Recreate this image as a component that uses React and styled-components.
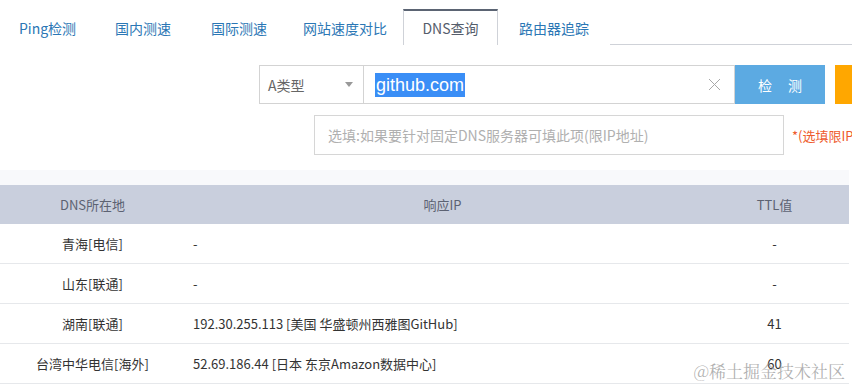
import React from "react";
import styled, { createGlobalStyle } from "styled-components";

const Global = createGlobalStyle`
  html, body { margin: 0; padding: 0; background: #fff; overflow: hidden; }
  body { font-family: "Microsoft YaHei", "Noto Sans CJK SC", "Liberation Sans", sans-serif; width: 852px; height: 389px; }
`;

const Page = styled.div`
  position: relative;
  width: 852px;
  height: 389px;
  overflow: hidden;
`;

const TabBar = styled.div`
  display: flex;
  height: 35px;
  padding-top: 9px;
  border-bottom: 1px solid #cfd2d8;
`;

const Tab = styled.div`
  display: flex;
  align-items: center;
  box-sizing: border-box;
  height: 36px;
  width: ${(p) => p.$w}px;
  justify-content: center;
  font-size: 14px;
  color: ${(p) => (p.$active ? "#555d6b" : "#2b77b5")};
  background: #fff;
  border-top: 2px solid ${(p) => (p.$active ? "#5b6473" : "transparent")};
  border-left: 1px solid ${(p) => (p.$active ? "#cfd2d8" : "transparent")};
  border-right: 1px solid ${(p) => (p.$active ? "#cfd2d8" : "transparent")};
  margin-bottom: -1px;
  white-space: nowrap;
`;

const SearchRow = styled.div`
  display: flex;
  margin-top: 20px;
  padding-left: 259px;
  height: 39px;
  & > * { flex-shrink: 0; }
`;

const Select = styled.div`
  box-sizing: border-box;
  width: 105px;
  height: 39px;
  border: 1px solid #d3d3d3;
  display: flex;
  align-items: center;
  justify-content: space-between;
  padding: 0 10px 0 8px;
  font-size: 14px;
  color: #666;
`;

const Arrow = styled.span`
  width: 0;
  height: 0;
  border-left: 4px solid transparent;
  border-right: 4px solid transparent;
  border-top: 5px solid #999;
`;

const Input = styled.div`
  box-sizing: border-box;
  width: 371px;
  height: 39px;
  border: 1px solid #d3d3d3;
  border-left: none;
  display: flex;
  align-items: center;
  justify-content: space-between;
  padding: 0 13px 0 11px;
`;

const Selected = styled.span`
  background: #3a8ef6;
  color: #fff;
  font-family: "Liberation Sans", Arial, sans-serif;
  font-size: 18px;
  line-height: 24px;
  padding: 0 1px;
`;

const CheckButton = styled.div`
  width: 90px;
  height: 39px;
  background: #5caae2;
  color: #fff;
  font-size: 14px;
  display: flex;
  align-items: center;
  justify-content: center;
  letter-spacing: 16px;
  text-indent: 16px;
`;

const OrangeButton = styled.div`
  margin-left: 10px;
  width: 60px;
  height: 39px;
  background: #ffa700;
`;

const ServerRow = styled.div`
  display: flex;
  align-items: center;
  margin-top: 11px;
  padding-left: 314px;
  white-space: nowrap;
`;

const ServerInput = styled.div`
  box-sizing: border-box;
  width: 470px;
  height: 40px;
  border: 1px solid #d6d6d6;
  display: flex;
  align-items: center;
  padding-left: 13px;
  font-size: 14px;
  color: #b0b0b0;
  flex-shrink: 0;
`;

const Note = styled.span`
  margin-left: 8px;
  font-size: 13px;
  color: #ee5a2c;
`;

const TableWrap = styled.div`
  margin-top: 15px;
  padding-top: 15px;
  background: #f8f9fb;
  width: 849px;
`;

const Table = styled.table`
  width: 849px;
  border-collapse: collapse;
  table-layout: fixed;
  background: #fff;
`;

const Th = styled.th`
  height: 39px;
  padding: 0;
  background: #c9cfdd;
  color: #5c6272;
  font-size: 13px;
  font-weight: normal;
  text-align: center;
`;

const Td = styled.td`
  height: 39px;
  padding: 0 ${(p) => (p.$left ? "8px" : "0")};
  border-bottom: 1px solid #e6e8eb;
  font-size: 13px;
  color: #333;
  text-align: ${(p) => (p.$left ? "left" : "center")};
  white-space: nowrap;
`;

const Watermark = styled.div`
  position: absolute;
  right: 7px;
  bottom: 6px;
  font-size: 17px;
  color: rgba(150, 150, 150, 0.75);
  font-family: "Noto Serif CJK SC", "Noto Sans CJK SC", serif;
`;

const tabs = [
  { t: "Ping检测", w: 95 },
  { t: "国内测速", w: 96 },
  { t: "国际测速", w: 96 },
  { t: "网站速度对比", w: 116 },
  { t: "DNS查询", w: 95, active: true },
  { t: "路由器追踪", w: 112 },
];

const rows = [
  ["青海[电信]", "-", "-"],
  ["山东[联通]", "-", "-"],
  ["湖南[联通]", "192.30.255.113 [美国 华盛顿州西雅图GitHub]", "41"],
  ["台湾中华电信[海外]", "52.69.186.44 [日本 东京Amazon数据中心]", "60"],
];

export default function App() {
  return (
    <Page>
      <Global />
      <TabBar>
        {tabs.map((x) => (
          <Tab key={x.t} $w={x.w} $active={x.active}>
            {x.t}
          </Tab>
        ))}
      </TabBar>
      <SearchRow>
        <Select>
          <span>A类型</span>
          <Arrow />
        </Select>
        <Input>
          <Selected>github.com</Selected>
          <svg width="13" height="13" viewBox="0 0 13 13">
            <path d="M1 1L12 12M12 1L1 12" stroke="#a8a8a8" strokeWidth="1" fill="none" />
          </svg>
        </Input>
        <CheckButton>检测</CheckButton>
        <OrangeButton />
      </SearchRow>
      <ServerRow>
        <ServerInput>选填:如果要针对固定DNS服务器可填此项(限IP地址)</ServerInput>
        <Note>*(选填限IP地址)</Note>
      </ServerRow>
      <TableWrap>
        <Table>
          <colgroup>
            <col style={{ width: "185px" }} />
            <col style={{ width: "515px" }} />
            <col style={{ width: "149px" }} />
          </colgroup>
          <thead>
            <tr>
              <Th>DNS所在地</Th>
              <Th>响应IP</Th>
              <Th>TTL值</Th>
            </tr>
          </thead>
          <tbody>
            {rows.map((r) => (
              <tr key={r[0]}>
                <Td>{r[0]}</Td>
                <Td $left>{r[1]}</Td>
                <Td>{r[2]}</Td>
              </tr>
            ))}
          </tbody>
        </Table>
      </TableWrap>
      <Watermark>@稀土掘金技术社区</Watermark>
    </Page>
  );
}
